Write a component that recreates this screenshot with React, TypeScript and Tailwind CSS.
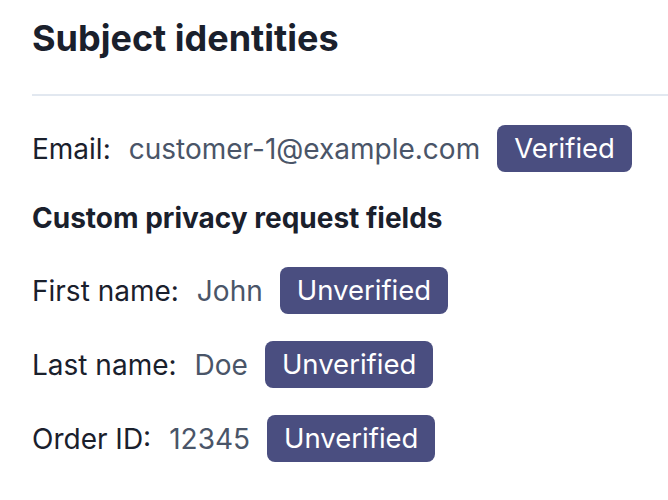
import React from 'react';

const Badge = ({ children }: { children: React.ReactNode }) => (
  <span className="inline-flex items-center h-[47px] px-[17px] rounded-lg bg-[#4a4e80] text-white text-[27.5px] leading-none">
    {children}
  </span>
);

const Row = ({ label, value, status }: { label: string; value: string; status: string }) => (
  <div className="flex items-center h-[47px]">
    <span className="text-[#1a202c]">{label}</span>
    <span className="ml-[18px] text-[#4a5568]">{value}</span>
    <span className="ml-[17px]">
      <Badge>{status}</Badge>
    </span>
  </div>
);

export default function App() {
  const fields = [
    { label: 'First name:', value: 'John' },
    { label: 'Last name:', value: 'Doe' },
    { label: 'Order ID:', value: '12345' },
  ];

  return (
    <div className="w-[668px] h-[500px] bg-white font-['Inter',sans-serif] text-[28px] overflow-hidden">
      <h2 className="ml-8 pt-[17px] text-[36px] leading-[43px] font-bold text-[#1a202c]">Subject identities</h2>
      <div className="ml-8 mt-[34px] border-b-2 border-[#e2e8f0]" />

      <div className="pl-8 mt-[29px]">
        <Row label="Email:" value="customer-1@example.com" status="Verified" />

        <h3 className="mt-[29px] text-[28px] leading-[34px] font-bold text-[#1a202c]">Custom privacy request fields</h3>

        <div className="mt-[32px] flex flex-col gap-[27px]">
          {fields.map((f) => (
            <Row key={f.label} label={f.label} value={f.value} status="Unverified" />
          ))}
        </div>
      </div>
    </div>
  );
}
